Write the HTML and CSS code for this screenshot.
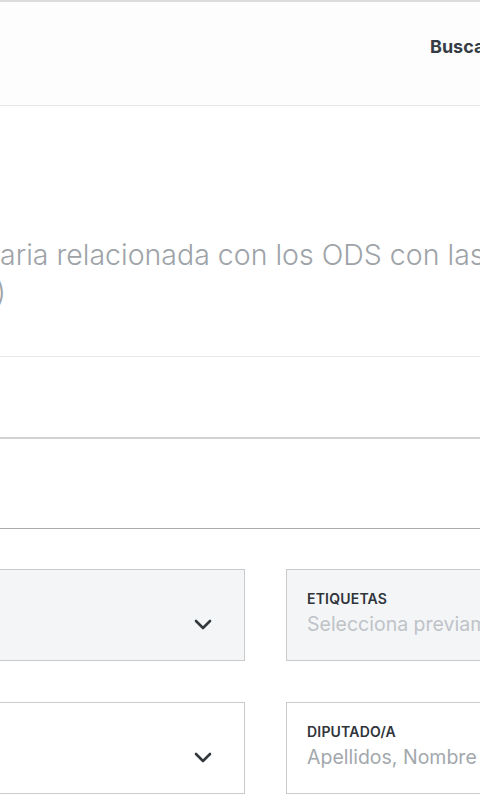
FILE: index.html
```html
<!DOCTYPE html>
<html lang="es">
  <head>
    <meta charset="UTF-8" />
    <meta name="viewport" content="width=device-width, initial-scale=1.0" />
    <title>Buscador ODS</title>
    <link rel="stylesheet" href="styles.css">
  </head>
  <body>
    <header class="topbar">
      <nav class="nav">
        <a href="#" class="nav-link">Buscador</a>
      </nav>
    </header>
    <section class="hero">
      <p class="lead">aria relacionada con los ODS con las<br /><span class="lead-end">)</span></p>
    </section>
    <div class="band band-top"></div>
    <div class="band band-search"></div>
    <div class="filters">
      <div class="field field-disabled">
        <div class="field-text"></div>
        <svg class="chevron" width="18" height="11" viewBox="0 0 18 11" fill="none" stroke="currentColor" stroke-width="2.6" stroke-linecap="round" stroke-linejoin="round">
          <path d="M2 2l7 7 7-7" />
        </svg>
      </div>
      <div class="field field-disabled">
        <div class="field-text">
          <span class="label">ETIQUETAS</span>
          <span class="placeholder placeholder-light">Selecciona previamente un tema</span>
        </div>
      </div>
      <div class="field">
        <div class="field-text"></div>
        <svg class="chevron" width="18" height="11" viewBox="0 0 18 11" fill="none" stroke="currentColor" stroke-width="2.6" stroke-linecap="round" stroke-linejoin="round">
          <path d="M2 2l7 7 7-7" />
        </svg>
      </div>
      <div class="field">
        <div class="field-text">
          <span class="label">DIPUTADO/A</span>
          <span class="placeholder">Apellidos, Nombre</span>
        </div>
      </div>
    </div>
  </body>
</html>
```

FILE: styles.css
```css
body {
  font-family: Inter, "Noto Sans", sans-serif;
  background: #fff;
  margin: 0;
  overflow: hidden;
  color: #2f343a;
}
.topbar {
  height: 106px;
  background: #fdfdfd;
  border-top: 2px solid #dcdcdc;
  border-bottom: 1px solid #e6e6e6;
  box-sizing: border-box;
  display: flex;
  align-items: center;
}
.nav {
  padding-left: 430px;
  white-space: nowrap;
  margin-top: -14px;
}
.nav-link {
  color: #363c45;
  text-decoration: none;
  font-weight: 700;
  font-size: 18px;
}
.hero {
  height: 251px;
  border-bottom: 1px solid #e8e8e8;
  padding-top: 130px;
  box-sizing: border-box;
}
.lead {
  margin: 0;
  font-size: 28.5px;
  line-height: 37px;
  color: #9ea3a8;
  white-space: nowrap;
  font-weight: 300;
}
.lead-end {
  margin-left: -4px;
}
.band {
  box-sizing: border-box;
}
.band-top {
  height: 82px;
  border-bottom: 2px solid #d2d2d2;
}
.band-search {
  height: 90px;
  border-bottom: 1px solid #a9acae;
}
.filters {
  display: grid;
  grid-template-columns: 446px 446px;
  column-gap: 41px;
  row-gap: 41px;
  margin-left: -201px;
  padding-top: 40px;
}
.field {
  height: 92px;
  box-sizing: border-box;
  border: 1px solid #c9cacb;
  background: #fff;
  display: flex;
  align-items: flex-start;
  justify-content: space-between;
  padding: 20px 32px 0 20px;
}
.field-disabled {
  background: #f3f5f7;
}
.field-text {
  display: flex;
  flex-direction: column;
  white-space: nowrap;
}
.label {
  font-size: 14px;
  line-height: 17px;
  font-weight: 600;
  color: #2f343a;
  letter-spacing: 0.2px;
}
.placeholder {
  margin-top: 4px;
  font-size: 19.5px;
  line-height: 26px;
  color: #a3a8ad;
}
.placeholder-light {
  color: #bfc3c7;
}
.chevron {
  color: #33383d;
  margin-top: 29px;
}
```
